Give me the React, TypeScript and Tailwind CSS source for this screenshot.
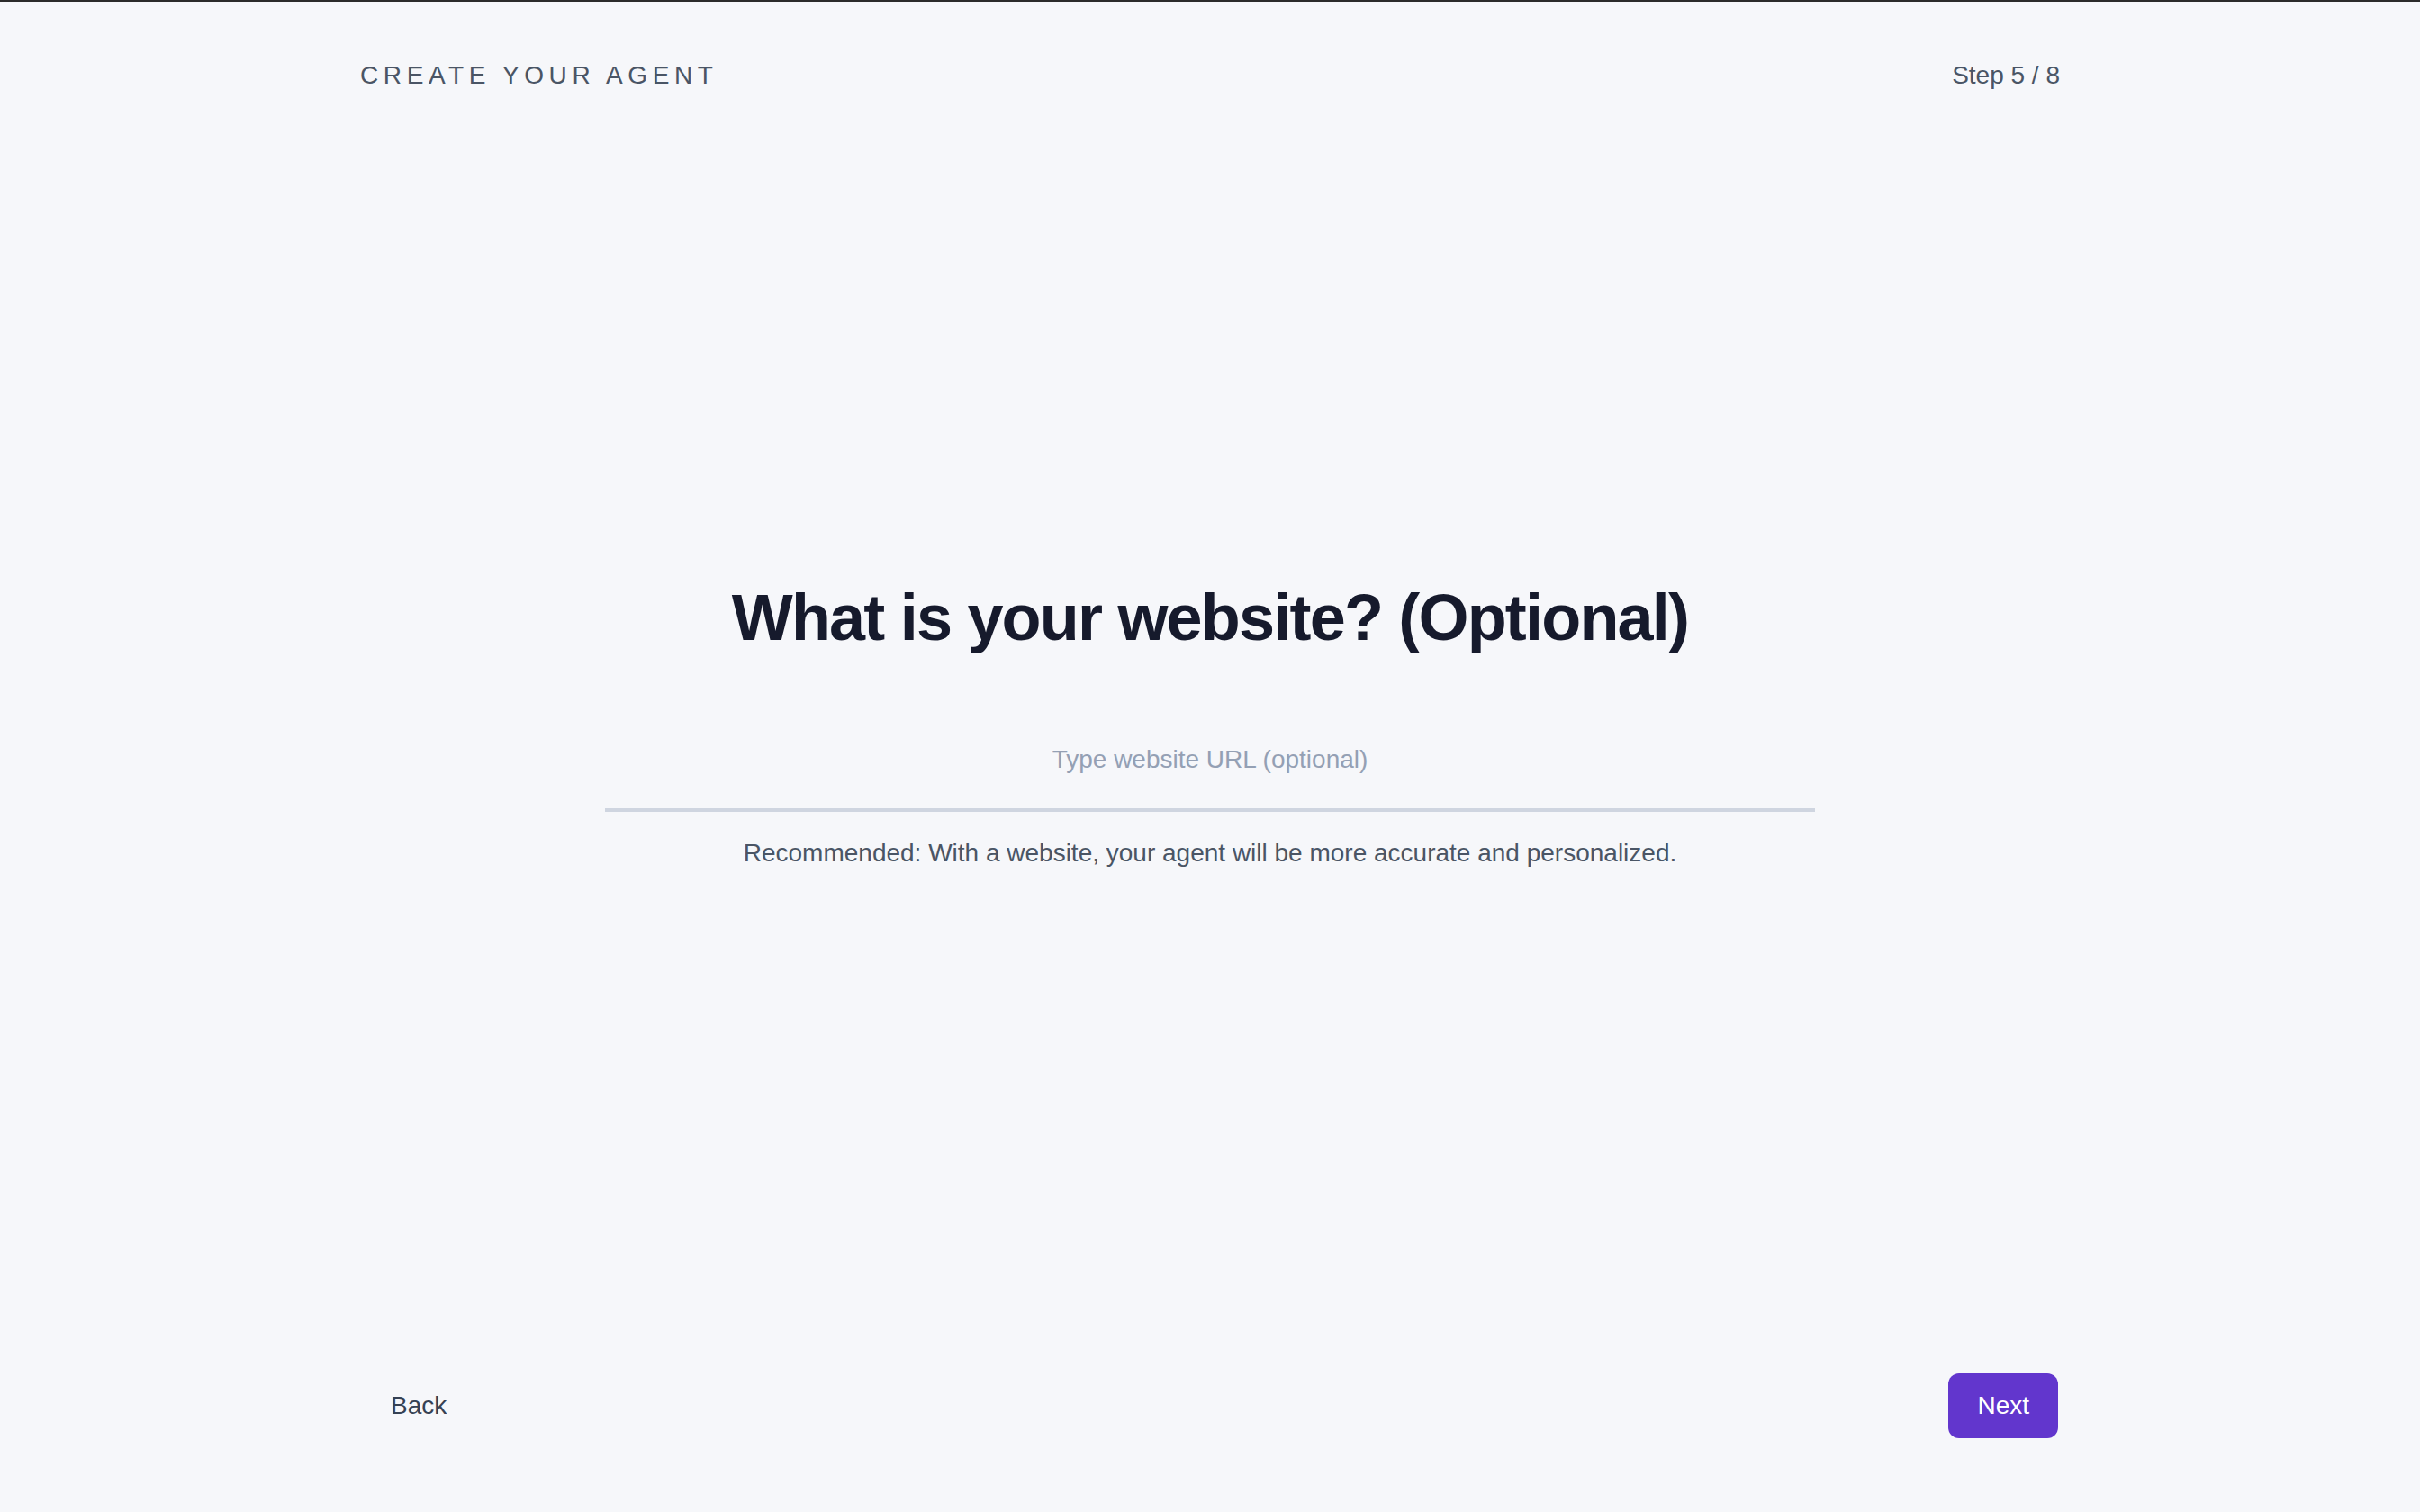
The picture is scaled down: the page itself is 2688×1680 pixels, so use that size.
import React, { useState } from 'react';

const font = { fontFamily: '"Liberation Sans", Arial, Helvetica, sans-serif' };

export default function App() {
  const [url, setUrl] = useState('');

  return (
    <div
      className="min-h-screen flex flex-col bg-[#f6f7fa] border-t-2 border-[#2b2b2b] text-gray-600"
      style={font}
    >
      <header className="w-full max-w-[2048px] mx-auto px-20 pt-[62px] pb-16 flex items-center justify-between">
        <div className="text-[28px] leading-[40px] uppercase tracking-[0.2em] text-gray-600">
          Create your agent
        </div>
        <div className="text-[28px] leading-[40px] text-gray-600">Step 5 / 8</div>
      </header>

      <main className="flex-1 flex items-center justify-center px-20">
        <div className="w-full max-w-[1344px] flex flex-col items-center">
          <h1 className="text-[72px] leading-[80px] font-bold tracking-tight text-[#161a2c] text-center">
            What is your website? (Optional)
          </h1>
          <input
            type="text"
            value={url}
            onChange={(e) => setUrl(e.target.value)}
            placeholder="Type website URL (optional)"
            className="mt-[66px] w-full bg-transparent border-b-4 border-[#cfd5e0] pt-8 pb-[34px] text-[28px] leading-[40px] text-center text-gray-800 placeholder:text-[#94a0b4] outline-none"
            style={font}
          />
          <p className="mt-[26px] text-[28px] leading-[40px] text-gray-600 text-center">
            Recommended: With a website, your agent will be more accurate and personalized.
          </p>
        </div>
      </main>

      <footer className="w-full max-w-[2048px] mx-auto px-[82px] pt-20 pb-[82px] flex items-center justify-between">
        <button className="px-8 py-4 text-[28px] leading-[40px] text-gray-700 rounded-xl" style={font}>
          Back
        </button>
        <button
          className="px-8 py-4 text-[28px] leading-[40px] text-white bg-[#6236cd] rounded-xl"
          style={font}
        >
          Next
        </button>
      </footer>
    </div>
  );
}
